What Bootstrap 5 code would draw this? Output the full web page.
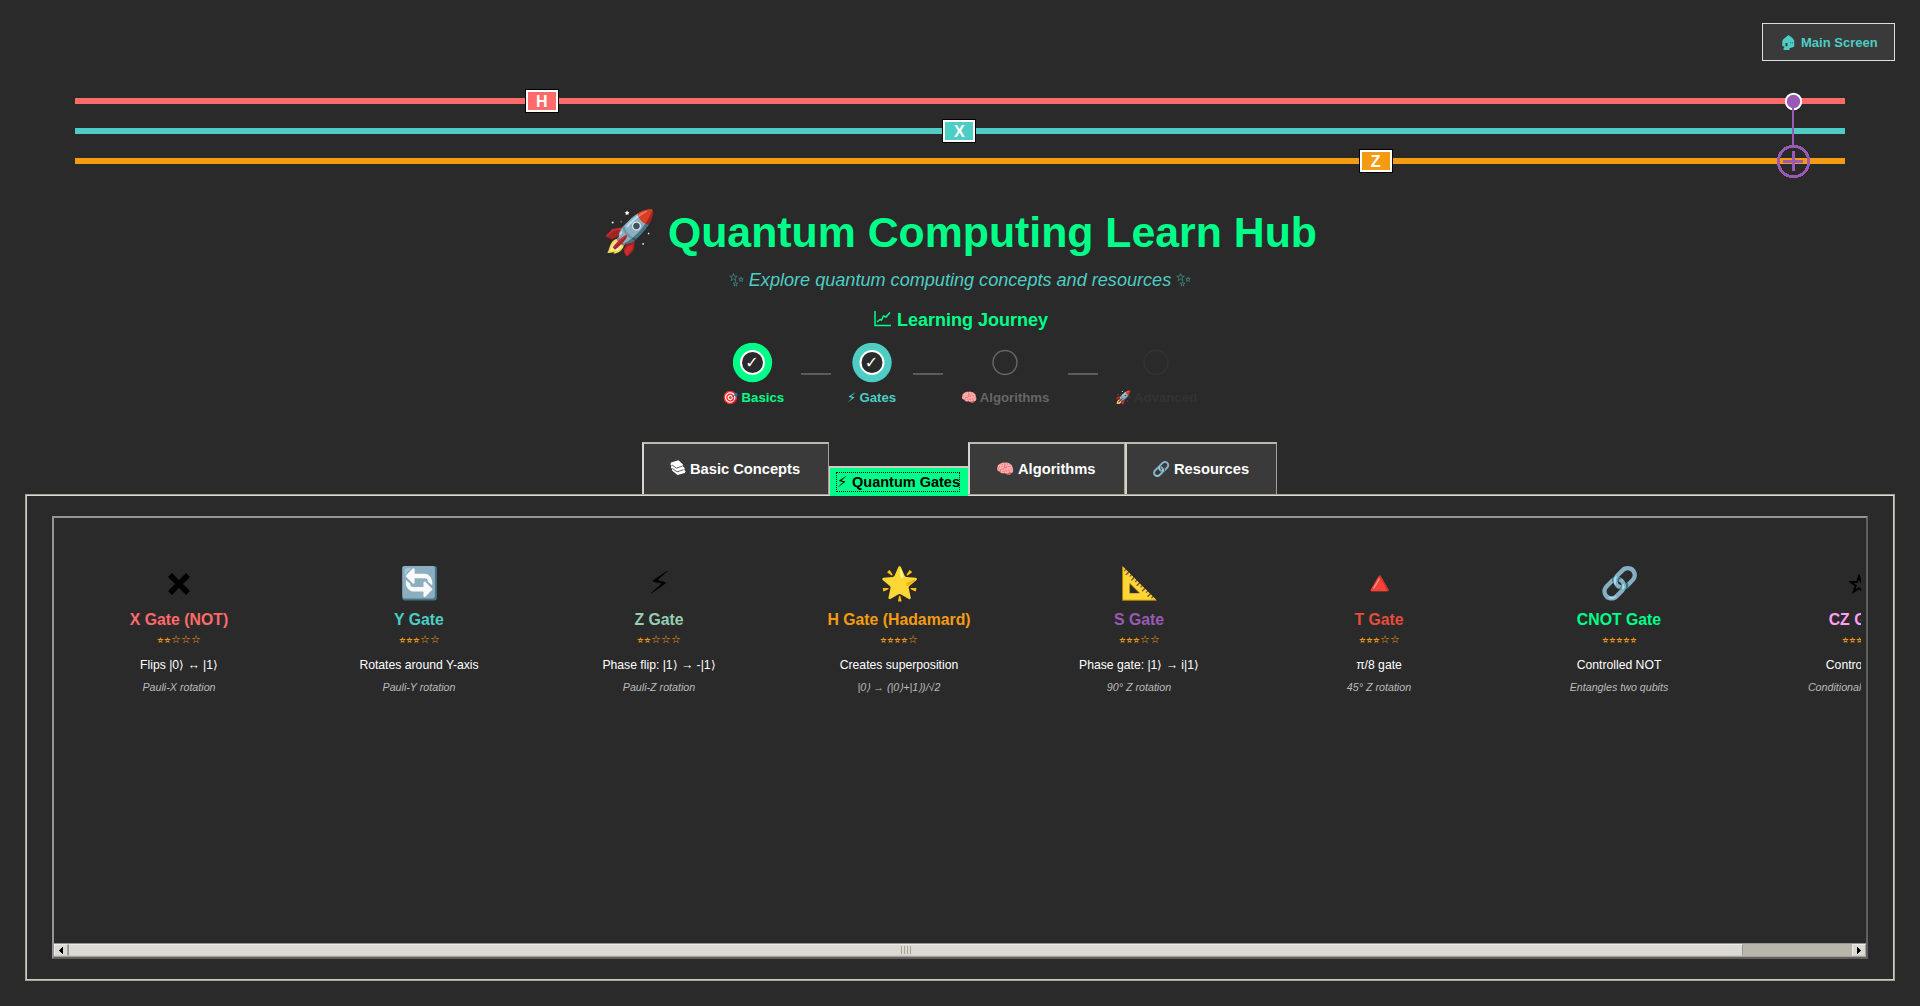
<!DOCTYPE html>
<html lang="en">
<head>
<meta charset="utf-8">
<meta name="viewport" content="width=device-width, initial-scale=1">
<title>Quantum Computing Learn Hub</title>
<link rel="stylesheet" href="https://cdn.jsdelivr.net/npm/bootstrap@5.3.0/dist/css/bootstrap.min.css">
<style>
body{background:#2a2a2a;color:#fff;font-family:"Liberation Sans",Arial,sans-serif;height:1006px;overflow:hidden}
.glyph{display:inline-block;fill:currentColor;stroke:none}
.home-btn{width:133px;height:38px;margin:23px 25px 0 0;background:#3a3a3a;border:1px solid #ddd;border-radius:0;color:#4ecdc4;font-size:13px;font-weight:700;padding:1px 0 0 3px;line-height:36px}
.home-btn:hover{background:#4ecdc4;color:#2a2a2a}
.home-btn .glyph{margin:-3px 2px 0 0}
.circuit{height:100px;margin-top:21px}
.circuit text{font-weight:700;font-size:16px;fill:#fff;text-anchor:middle}
.hub-title{font-size:42.8px;line-height:50px;font-weight:700;color:#0f8;margin-top:25px}
.hub-sub{font-size:18.1px;line-height:22px;font-style:italic;color:#4ecdc4;margin-top:12px}
.hub-sub .glyph{margin-top:-3px;opacity:.75}
.journey-title{font-size:18px;line-height:22px;font-weight:700;color:#0f8;margin-top:18px;padding-left:2px}
.journey-title .glyph{margin:-4px 1px 0 0}
.steps{margin-top:12px;height:63px}
.step-col{font-size:13.2px;font-weight:700;line-height:16px;white-space:nowrap}
.step-col svg{margin-bottom:7px}
.step-col text{font-size:16px;font-family:"DejaVu Sans",sans-serif;fill:#fff;text-anchor:middle;font-weight:400}
.s-basics{width:63px;color:#0f8}
.s-gates{width:50px;color:#4ecdc4}
.s-algos{width:93px;color:#666}
.s-adv{width:85px;color:#333}
.dash{width:30px;height:2px;background:#5c5c5c;margin:30px 16px 0}
.hub-tabs{margin:36px 0 0 642px;height:52px}
.tab-btn{border:solid;border-width:2px 1px 0 2px;border-color:#bdb9b0 #a8a294 #a8a294 #d6d3cc;border-radius:0;background:#3a3a3a;color:#fff;height:52px;font-size:14.7px;line-height:19px;font-weight:700;padding:0 2px 0 0;white-space:nowrap}
.tab-btn:hover{background:#444;color:#fff}
.tab-btn.active{background:#0f8;color:#000;height:30px;margin-bottom:-2px;border-width:2px 0 0 1px;border-color:#cfccc4;z-index:1}
.focus-box{border:1px dotted #000;width:124px;height:20px;line-height:18px;font-size:14.5px}
.pane{margin:0 25px;height:487px;padding:20px 25px;border:2px solid #cfccc4;border-top-color:#dcdad5;outline:1px solid #a8a294;outline-offset:-1px}
.gate-view{height:443px;border:2px solid;border-color:#959595 #606060 #606060 #959595}
.gate-row{height:425px;margin-right:5px;overflow:hidden;padding-left:5px}
.gate-item{width:240px;flex:none;text-align:center;padding-top:42px;white-space:nowrap}
.g-icon{font-size:31.5px;line-height:46px;height:46px;color:#000}
.g-icon .glyph{margin-top:-4px}
.g-name{font-size:15.8px;line-height:18px;margin-top:5px}
.g-stars{font-size:11px;line-height:14px;height:14px;color:#f39c12;margin-top:3px}
.g-stars i{font-style:normal;font-size:10px}
.g-desc{font-size:12.2px;line-height:14px;margin-top:12px}
.g-hint{font-size:10.7px;line-height:13px;font-style:italic;color:#bbb;margin-top:9px}
.hbar{height:14px;background:#bab5ab;border-top:1px solid #9c968a;border-bottom:1px solid #a8a294}
.hbar-btn{width:14px;background:#dcdad5;border:1px solid;border-color:#eeebe7 #a8a294 #cfccc4 #eeebe7}
.hbar-thumb{width:1675px;background:#dcdad5;border:1px solid;border-color:#eeebe7 #9c968a #cfccc4 #9c968a}
</style>
</head>
<body>
<svg width="0" height="0" class="position-absolute">
<defs>
<symbol id="sparkles" viewBox="0 0 14 14"><g fill="none" stroke="currentColor" stroke-width=".6" stroke-linejoin="round"><path d="M4 .5l.9 2.7h2.9L5.500 4.900l.9 2.800L4 6 1.600 7.700l.9-2.800L.2 3.200h2.900z"/><path d="M11.500 4l.6 1.700h1.700l-1.400 1.100.5 1.700-1.400-1-1.400 1 .5-1.700-1.400-1.100h1.700z"/><path d="M6 8.600l.6 1.600h1.800L7 11.300l.5 1.800-1.500-1-1.500 1 .5-1.800-1.400-1.100h1.800z"/></g></symbol>
</defs>
</svg>

<header class="d-flex justify-content-end">
<button class="btn home-btn" type="button"><svg class="glyph" width="13" height="15" viewBox="0 0 13 15"><path d="M6.500 0L1 4.500.3 6v5l2 .8v1.400H1.500V15h6v-1.800l4.700-1.400V5.500L10.500 3z"/><path d="M3.500 8h2v3.200h-2z" fill="#3a3a3a"/><path d="M8 7h1.200v1.500H8zM10 7h1v1.500h-1z" fill="#2f8f88"/></svg> Main Screen</button>
</header>

<svg class="circuit d-block" width="1920" height="100" viewBox="0 82 1920 100">
<g shape-rendering="crispEdges">
<path d="M75 101h1770" stroke="#ff6b6b" stroke-width="6"/>
<path d="M75 131h1770" stroke="#4ecdc4" stroke-width="6"/>
<path d="M75 161h1770" stroke="#f39c12" stroke-width="6"/>
<path d="M525 89h34v24h-34zM942 119h34v24h-34zM1359 149h34v24h-34z" fill="#000"/>
<path d="M526 90h32v22h-32zM943 120h32v22h-32zM1360 150h32v22h-32z" fill="#fff"/>
<path d="M528 92h28v18h-28z" fill="#ff6b6b"/>
<path d="M945 122h28v18h-28z" fill="#4ecdc4"/>
<path d="M1362 152h28v18h-28z" fill="#f39c12"/>
</g>
<text x="541.700" y="107">H</text><text x="959.300" y="137">X</text><text x="1375.700" y="167">Z</text>
<circle cx="1793.500" cy="101.500" r="7.700" fill="#9b59b6" stroke="#fff" stroke-width="2"/>
<g fill="none" stroke="#9b59b6" shape-rendering="crispEdges">
<path d="M1793 102v44" stroke-width="2"/>
<circle cx="1793.500" cy="161.500" r="15.200" stroke-width="3"/>
<path d="M1793.500 151v20M1783 161.500h20" stroke-width="3"/>
</g>
</svg>

<div class="text-center">
<h1 class="hub-title mb-0">🚀 Quantum Computing Learn Hub</h1>
<div class="hub-sub"><svg class="glyph" width="15" height="14"><use href="#sparkles"/></svg> Explore quantum computing concepts and resources <svg class="glyph" width="15" height="14"><use href="#sparkles"/></svg></div>
<div class="journey-title"><svg class="glyph" width="17" height="16" viewBox="0 0 17 16"><path d="M1 0v14.500h16M3 11l3-2.500 1.500.5 2-4 2.500 1 4-4.500" fill="none" stroke="currentColor" stroke-width="1.500"/></svg> Learning Journey</div>
</div>

<div class="steps d-flex justify-content-center">
<div class="step-col s-basics d-flex flex-column align-items-center"><svg width="40" height="40"><circle cx="19.500" cy="19.500" r="19.700" fill="#0f8"/><circle cx="19.500" cy="19.500" r="11.500" fill="#2a2a2a" stroke="#fff" stroke-width="2"/><text x="19" y="25">✓</text></svg><span>🎯 Basics</span></div>
<div class="dash"></div>
<div class="step-col s-gates d-flex flex-column align-items-center"><svg width="40" height="40"><circle cx="20" cy="19.500" r="19.700" fill="#4ecdc4"/><circle cx="20" cy="19.500" r="11.500" fill="#2a2a2a" stroke="#fff" stroke-width="2"/><text x="19.500" y="25">✓</text></svg><span><span class="fw-normal">⚡&#xfe0e;</span> Gates</span></div>
<div class="dash"></div>
<div class="step-col s-algos d-flex flex-column align-items-center"><svg width="40" height="40"><circle cx="20" cy="19.500" r="12" fill="none" stroke="#666" stroke-width="1.500"/></svg><span>🧠 Algorithms</span></div>
<div class="dash"></div>
<div class="step-col s-adv d-flex flex-column align-items-center"><svg width="40" height="40"><circle cx="20" cy="19.500" r="12" fill="none" stroke="#333" stroke-width="1.500"/></svg><span>🚀 Advanced</span></div>
</div>

<div class="hub-tabs d-flex align-items-end" role="tablist">
<button class="btn tab-btn" style="width:187px" role="tab"><svg class="glyph" width="16" height="15" viewBox="0 0 16 15" style="margin-top:-4px"><path d="M1 2.500L8.500.300l4.500 4.200-.3 1.500 2 2-.4 1.700 1.200 1.500-.6 1.800L7.500 15 2 10.500l.3-1.500L.8 7.500l.8-1.700L.5 4.500z"/><path d="M2 5l4.500 3.200L12.500 6M2.500 8.500l4.500 3.300 6.500-2" fill="none" stroke="#3a3a3a" stroke-width=".8"/></svg> Basic Concepts</button>
<button class="btn tab-btn active d-flex justify-content-center align-items-center" style="width:139px" role="tab"><span class="focus-box"><span class="fw-normal">⚡&#xfe0e;</span> Quantum Gates</span></button>
<button class="btn tab-btn" style="width:157px" role="tab">🧠 Algorithms</button>
<button class="btn tab-btn" style="width:152px" role="tab">🔗 Resources</button>
</div>

<main class="pane">
<div class="gate-view d-flex flex-column">
<div class="gate-row d-flex">
<div class="gate-item"><div class="g-icon"><svg class="glyph" width="24" height="24" viewBox="0 0 24 24"><path d="M3 3l18 18M21 3L3 21" stroke="#000" stroke-width="5.500"/></svg></div><div class="g-name fw-bold" style="color:#ff6b6b">X Gate (NOT)</div><div class="g-stars"><i>⭐&#xfe0e;⭐&#xfe0e;</i>☆☆☆</div><div class="g-desc">Flips |0⟩ ↔ |1⟩</div><div class="g-hint">Pauli-X rotation</div></div>
<div class="gate-item"><div class="g-icon">🔄</div><div class="g-name fw-bold" style="color:#4ecdc4">Y Gate</div><div class="g-stars"><i>⭐&#xfe0e;⭐&#xfe0e;⭐&#xfe0e;</i>☆☆</div><div class="g-desc">Rotates around Y-axis</div><div class="g-hint">Pauli-Y rotation</div></div>
<div class="gate-item"><div class="g-icon">⚡&#xfe0e;</div><div class="g-name fw-bold" style="color:#96ceb4">Z Gate</div><div class="g-stars"><i>⭐&#xfe0e;⭐&#xfe0e;</i>☆☆☆</div><div class="g-desc">Phase flip: |1⟩ → -|1⟩</div><div class="g-hint">Pauli-Z rotation</div></div>
<div class="gate-item"><div class="g-icon">🌟</div><div class="g-name fw-bold" style="color:#f39c12">H Gate (Hadamard)</div><div class="g-stars"><i>⭐&#xfe0e;⭐&#xfe0e;⭐&#xfe0e;⭐&#xfe0e;</i>☆</div><div class="g-desc">Creates superposition</div><div class="g-hint">|0⟩ → (|0⟩+|1⟩)/√2</div></div>
<div class="gate-item"><div class="g-icon">📐</div><div class="g-name fw-bold" style="color:#9b59b6">S Gate</div><div class="g-stars"><i>⭐&#xfe0e;⭐&#xfe0e;⭐&#xfe0e;</i>☆☆</div><div class="g-desc">Phase gate: |1⟩ → i|1⟩</div><div class="g-hint">90° Z rotation</div></div>
<div class="gate-item"><div class="g-icon">🔺</div><div class="g-name fw-bold" style="color:#e74c3c">T Gate</div><div class="g-stars"><i>⭐&#xfe0e;⭐&#xfe0e;⭐&#xfe0e;</i>☆☆</div><div class="g-desc">π/8 gate</div><div class="g-hint">45° Z rotation</div></div>
<div class="gate-item"><div class="g-icon">🔗</div><div class="g-name fw-bold" style="color:#0f8">CNOT Gate</div><div class="g-stars"><i>⭐&#xfe0e;⭐&#xfe0e;⭐&#xfe0e;⭐&#xfe0e;⭐&#xfe0e;</i></div><div class="g-desc">Controlled NOT</div><div class="g-hint">Entangles two qubits</div></div>
<div class="gate-item"><div class="g-icon"><svg class="glyph" width="20" height="20" viewBox="0 0 20 20"><path d="M10 2l2 6h6.300l-5 3.700 2 6-5.300-3.600-5.300 3.600 2-6-5-3.700H8z" fill="none" stroke="#000" stroke-width="2"/></svg></div><div class="g-name fw-bold" style="color:#ff9ff3">CZ Gate</div><div class="g-stars"><i>⭐&#xfe0e;⭐&#xfe0e;⭐&#xfe0e;⭐&#xfe0e;⭐&#xfe0e;</i></div><div class="g-desc">Controlled Z</div><div class="g-hint">Conditional phase flip</div></div>
</div>
<div class="hbar d-flex">
<div class="hbar-btn d-flex align-items-center justify-content-center"><svg class="d-block" width="4" height="7" shape-rendering="crispEdges"><path d="M4 0v7L0 3.500z"/></svg></div>
<div class="hbar-thumb d-flex align-items-center justify-content-center"><svg class="d-block" width="10" height="8" shape-rendering="crispEdges"><path d="M.5 0v8M3.500 0v8M6.500 0v8M9.500 0v8" stroke="#a8a294"/></svg></div>
<div class="hbar-btn d-flex align-items-center justify-content-center ms-auto"><svg class="d-block" width="4" height="7" shape-rendering="crispEdges"><path d="M0 0v7l4-3.500z"/></svg></div>
</div>
</div>
</main>
<script src="https://cdn.jsdelivr.net/npm/bootstrap@5.3.0/dist/js/bootstrap.bundle.min.js"></script>
</body>
</html>
